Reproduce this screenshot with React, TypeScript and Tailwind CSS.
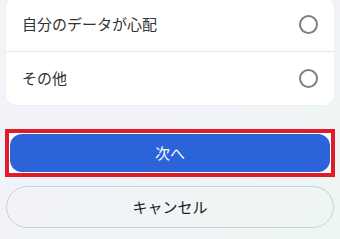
export default function App() {
  const options = ['自分のデータが心配', 'その他']

  return (
    <div
      className="w-[340px] h-[239px] overflow-hidden bg-gradient-to-br from-[#f4f4f9] via-[#f1f3f8] to-[#edf6f2] px-[6px]"
      style={{ fontFamily: '"Noto Sans CJK JP", "Noto Sans", sans-serif' }}
    >
      {/* Option card */}
      <div className="-mt-[3px] rounded-[10px] bg-white shadow-[0_0_2px_rgba(0,0,0,0.06)]">
        {options.map((label, i) => (
          <div key={label}>
            {i > 0 && <div className="h-px bg-[#e6e6e9]" />}
            <div className={`flex items-center justify-between pl-[16px] pr-[16px] ${i === 0 ? 'h-[54px]' : 'h-[53px]'}`}>
              <span className="text-[15px] text-[#333333]">{label}</span>
              <span className="w-[19px] h-[19px] rounded-full border-2 border-[#7b7f86]" />
            </div>
          </div>
        ))}
      </div>

      {/* Next (highlighted) */}
      <div className="mt-[24px] -mx-px border-4 border-[#e21b2b] bg-white p-px">
        <button className="w-full h-[38px] rounded-[12px] bg-[#2b63d8] text-white text-[15px] flex items-center justify-center">
          次へ
        </button>
      </div>

      {/* Cancel */}
      <button className="mt-[9px] w-full h-[42px] rounded-full border border-[#cdd1d5] bg-transparent text-[15px] text-[#222222] flex items-center justify-center">
        キャンセル
      </button>
    </div>
  )
}
